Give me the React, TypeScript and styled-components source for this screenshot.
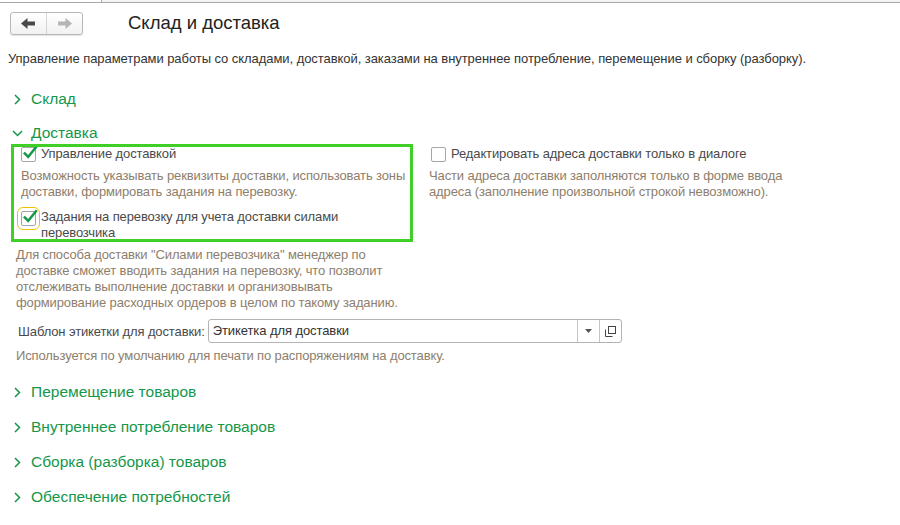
import React from "react";
import styled, { createGlobalStyle } from "styled-components";

const GlobalStyle = createGlobalStyle`
  html, body {
    margin: 0;
    padding: 0;
    background: #ffffff;
    font-family: "Liberation Sans", Arial, sans-serif;
  }
`;

const Page = styled.div`
  width: 900px;
  height: 525px;
  overflow: hidden;
  background: #fff;
  color: #333;
`;

const TabStrip = styled.div`
  display: flex;
  height: 2px;
  border-bottom: 1px solid #a8a8a8;
`;

const TabPart = styled.div<{ $wide?: boolean }>`
  width: ${(p) => (p.$wide ? "auto" : "101px")};
  flex: ${(p) => (p.$wide ? 1 : "none")};
  background: ${(p) => (p.$wide ? "#f4f4f4" : "#fff")};
  border-left: ${(p) => (p.$wide ? "1px solid #a8a8a8" : "none")};
`;

const Header = styled.div`
  display: flex;
  align-items: center;
  padding: 8px 0 0 10px;
  gap: 45px;
`;

const NavGroup = styled.div`
  display: flex;
  height: 21px;
  border: 1px solid #b9b9b9;
  border-radius: 3px;
  background: linear-gradient(#ffffff, #f1f1f1);
  box-shadow: 0 1px 1px rgba(0, 0, 0, 0.12);
`;

const NavButton = styled.div<{ $first?: boolean }>`
  width: 35px;
  display: flex;
  align-items: center;
  justify-content: center;
  border-left: ${(p) => (p.$first ? "none" : "1px solid #d4d4d4")};
`;

const Title = styled.div`
  font-size: 18.5px;
  color: #222;
  line-height: 24px;
`;

const Intro = styled.div`
  margin: 16px 0 0 8px;
  font-size: 13px;
  line-height: 16px;
  letter-spacing: -0.06px;
  color: #333;
`;

const Groups = styled.div`
  margin-top: 22px;
  display: flex;
  flex-direction: column;
`;

const GroupHeader = styled.div<{ $gap?: number }>`
  display: flex;
  align-items: center;
  height: 20px;
  margin-top: ${(p) => p.$gap ?? 0}px;
  padding-left: 12px;
  font-size: 15.5px;
  color: #14974a;
`;

const Chevron = styled.span`
  width: 11px;
  height: 20px;
  margin-right: 8px;
  display: flex;
  align-items: center;
  justify-content: center;
`;

const GroupBody = styled.div`
  padding-left: 16px;
  margin-top: 3px;
`;

const Columns = styled.div`
  display: grid;
  grid-template-columns: 397px 362px;
  column-gap: 16px;
`;

const Column = styled.div``;

const Highlight = styled.div`
  position: relative;
  padding: 0 3px 0 5px;
  &::after {
    content: "";
    position: absolute;
    left: -5px;
    right: 0;
    top: -2px;
    bottom: -1px;
    border: 3px solid #3fcf26;
    pointer-events: none;
  }
`;

const CheckRow = styled.div<{ $gap?: number; $indent?: number }>`
  display: flex;
  align-items: flex-start;
  margin-top: ${(p) => p.$gap ?? 0}px;
  padding-left: ${(p) => p.$indent ?? 0}px;
`;

const Box = styled.div<{ $focus?: boolean; $top?: number }>`
  position: relative;
  flex: none;
  width: 13px;
  height: 13px;
  margin-top: ${(p) => p.$top ?? 1}px;
  margin-right: 5px;
  border: 1px solid #a6a6a6;
  border-radius: 2px;
  background: #fff;
  outline: ${(p) => (p.$focus ? "1px solid #f2c200" : "none")};
  outline-offset: 3px;
  svg {
    position: absolute;
    left: 0;
    top: -3px;
  }
`;

const Label = styled.div`
  font-size: 13px;
  line-height: 16px;
  letter-spacing: -0.12px;
  color: #4a4a4a;
`;

const Note = styled.div<{ $gap?: number; $indent?: number }>`
  margin-top: ${(p) => p.$gap ?? 0}px;
  margin-left: ${(p) => p.$indent ?? 0}px;
  font-size: 13px;
  line-height: 16px;
  letter-spacing: -0.12px;
  color: #8e7e6c;
`;

const FieldRow = styled.div`
  display: flex;
  align-items: center;
  margin-top: 8px;
  padding-left: 2px;
  gap: 3px;
`;

const FieldLabel = styled.div`
  font-size: 13px;
  letter-spacing: -0.12px;
  color: #4a4a4a;
`;

const Field = styled.div`
  display: flex;
  width: 412px;
  height: 22px;
  border: 1px solid #b3b3b3;
  border-radius: 3px;
  background: #fff;
`;

const FieldText = styled.div`
  flex: 1;
  padding-left: 4px;
  font-size: 13px;
  line-height: 22px;
  letter-spacing: -0.08px;
  color: #333;
`;

const FieldButton = styled.div`
  width: 21px;
  display: flex;
  align-items: center;
  justify-content: center;
  border-left: 1px solid #c4c4c4;
`;

const Check = () => (
  <svg width="17" height="16" viewBox="0 0 17 16">
    <path d="M2.8 8.4 L6.2 11.8 L14 2.2" fill="none" stroke="#16994a" strokeWidth="2.5" strokeLinecap="square" />
  </svg>
);

const ArrowLeft = () => (
  <svg width="15" height="11" viewBox="0 0 15 11">
    <path d="M0 5.5 L6.5 0 L6.5 3.5 L14 3.5 L14 7.5 L6.5 7.5 L6.5 11 Z" fill="#4a4a4a" />
  </svg>
);

const ArrowRight = () => (
  <svg width="15" height="11" viewBox="0 0 15 11">
    <path d="M15 5.5 L8.5 0 L8.5 3.5 L1 3.5 L1 7.5 L8.5 7.5 L8.5 11 Z" fill="#b5b5b5" />
  </svg>
);

const ChevronRight = () => (
  <svg width="7" height="11" viewBox="0 0 7 11">
    <path d="M1 1 L5.5 5.5 L1 10" fill="none" stroke="#14974a" strokeWidth="1.5" />
  </svg>
);

const ChevronDown = () => (
  <svg width="11" height="7" viewBox="0 0 11 7">
    <path d="M1 1 L5.5 5.5 L10 1" fill="none" stroke="#14974a" strokeWidth="1.5" />
  </svg>
);

const DropIcon = () => (
  <svg width="7" height="4" viewBox="0 0 7 4">
    <path d="M0 0 L7 0 L3.5 4 Z" fill="#555" />
  </svg>
);

const OpenIcon = () => (
  <svg width="11" height="11" viewBox="0 0 11 11">
    <rect x="3.5" y="0.5" width="7" height="7" fill="none" stroke="#444" />
    <path d="M0.5 3.5 L0.5 10.5 L7.5 10.5" fill="none" stroke="#444" />
  </svg>
);

const collapsed = [
  "Перемещение товаров",
  "Внутреннее потребление товаров",
  "Сборка (разборка) товаров",
  "Обеспечение потребностей",
];

export default function App() {
  return (
    <Page>
      <GlobalStyle />
      <TabStrip>
        <TabPart />
        <TabPart $wide />
      </TabStrip>
      <Header>
        <NavGroup>
          <NavButton $first>
            <ArrowLeft />
          </NavButton>
          <NavButton>
            <ArrowRight />
          </NavButton>
        </NavGroup>
        <Title>Склад и доставка</Title>
      </Header>
      <Intro>
        Управление параметрами работы со складами, доставкой, заказами на внутреннее потребление, перемещение и
        сборку (разборку).
      </Intro>
      <Groups>
        <GroupHeader>
          <Chevron>
            <ChevronRight />
          </Chevron>
          Склад
        </GroupHeader>
        <GroupHeader $gap={14}>
          <Chevron>
            <ChevronDown />
          </Chevron>
          Доставка
        </GroupHeader>
        <GroupBody>
          <Columns>
            <Column>
              <Highlight>
                <CheckRow>
                  <Box>
                    <Check />
                  </Box>
                  <Label>Управление доставкой</Label>
                </CheckRow>
                <Note $gap={6}>
                  Возможность указывать реквизиты доставки, использовать зоны доставки, формировать задания на
                  перевозку.
                </Note>
                <CheckRow $gap={9}>
                  <Box $focus $top={2}>
                    <Check />
                  </Box>
                  <Label>Задания на перевозку для учета доставки силами перевозчика</Label>
                </CheckRow>
              </Highlight>
              <Note $gap={6}>
                Для способа доставки "Силами перевозчика" менеджер по доставке сможет вводить задания на перевозку,
                что позволит отслеживать выполнение доставки и организовывать формирование расходных ордеров в
                целом по такому заданию.
              </Note>
            </Column>
            <Column>
              <CheckRow $indent={2}>
                <Box />
                <Label>Редактировать адреса доставки только в диалоге</Label>
              </CheckRow>
              <Note $gap={6}>
                Части адреса доставки заполняются только в форме ввода адреса (заполнение произвольной строкой
                невозможно).
              </Note>
            </Column>
          </Columns>
          <FieldRow>
            <FieldLabel>Шаблон этикетки для доставки:</FieldLabel>
            <Field>
              <FieldText>Этикетка для доставки</FieldText>
              <FieldButton>
                <DropIcon />
              </FieldButton>
              <FieldButton>
                <OpenIcon />
              </FieldButton>
            </Field>
          </FieldRow>
          <Note $gap={5}>Используется по умолчанию для печати по распоряжениям на доставку.</Note>
        </GroupBody>
        {collapsed.map((title, i) => (
          <GroupHeader key={title} $gap={i === 0 ? 18 : 15}>
            <Chevron>
              <ChevronRight />
            </Chevron>
            {title}
          </GroupHeader>
        ))}
      </Groups>
    </Page>
  );
}
